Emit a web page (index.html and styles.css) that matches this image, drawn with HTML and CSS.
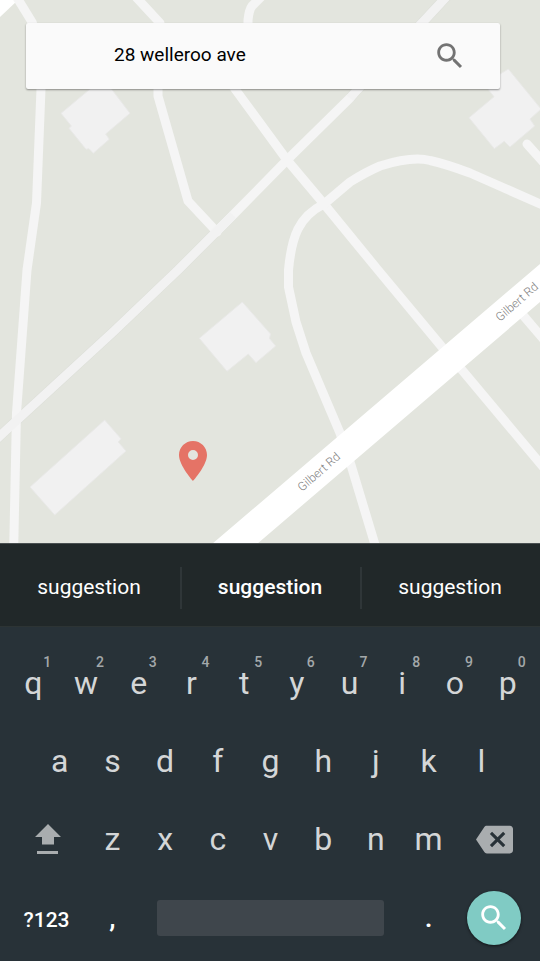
FILE: index.html
```html
<!DOCTYPE html>
<html lang="en">
<head>
<meta charset="utf-8">
<meta name="viewport" content="width=device-width, initial-scale=1">
<title>Map search</title>
<link rel="stylesheet" href="styles.css">
</head>
<body>
<main class="map">
  <svg class="map-canvas" viewBox="0 0 540 543" preserveAspectRatio="xMidYMid slice" aria-hidden="true">
    <polygon class="highway" points="0,0 18,0 0,17"/>
    <g class="lane-edge">
      <path d="M-5 440.500L15 422L113 332L178 270L217 231L233 215"/>
      <path d="M350 98L358 89L422 23L448 -5"/>
    </g>
    <g class="street">
      <path d="M16 -4L32 22L41 50V89L36.500 203L27 270L16.500 413L13.700 548"/>
      <path d="M135 -4L160 23L158 60V96L188 201L217 232"/>
      <path d="M248 30V20Q249 10 252 6L262 -4"/>
      <path d="M217 231L233 215L287 160L350 98"/>
      <path d="M225 75L235 89L287 160L324 204L378 270L442 347L462 370L544 468"/>
      <path d="M545 206L470 173Q446 164 430 160.500Q412 156 380 166Q366 172 350 182L324 204Q306 213 298 229Q291 243 288.500 270V287L296 322L306 353L340 433L351 465L376 548"/>
      <path d="M527 144L545 164"/>
      <path d="M522 314L545 341"/>
    </g>
    <g class="lane">
      <path d="M-5 440.500L15 422L113 332L178 270L217 231L233 215"/>
      <path d="M350 98L358 89L422 23L448 -5"/>
    </g>
    <polygon class="highway" points="212,544 540,264 545,260 545,298 540,302 257,544"/>
    <g class="building">
      <polygon points="96,84 110,87 130,113.300 105.700,134 109.300,139.300 93.300,153.300 89,148.700 86,149.300 69,128.300 71.300,126 61,113.300"/>
      <polygon points="508.300,69 541,109 530,119 534.700,126 510,147 504.300,141.300 494.300,148.700 469,117.700 494,96.700 484,84"/>
      <polygon points="242.300,302 270.500,334 269.500,338.500 275.700,346 256,362.700 248.300,354 227,371.300 199.300,338.300"/>
      <polygon points="104.700,420 121,438.700 118.300,442 126,451 54.700,515 30,487"/>
    </g>
    <path class="pin" d="M193 441c-7.740 0-14 6.260-14 14c0 10.500 14 26 14 26s14-15.500 14-26c0-7.740-6.260-14-14-14zm0 19a5 5 0 1 1 0-10a5 5 0 0 1 0 10z"/>
    <text class="road-name" transform="translate(302 492) rotate(-41)">Gilbert Rd</text>
    <text class="road-name" transform="translate(500 322) rotate(-41)">Gilbert Rd</text>
  </svg>
  <form class="search" role="search">
    <input class="search-input" type="text" value="28 welleroo ave" aria-label="Search address">
    <button class="search-button" type="button" aria-label="Search">
      <svg class="search-icon" viewBox="0 0 24 24"><path d="M15.500 14h-.79l-.28-.27C15.410 12.590 16 11.110 16 9.500 16 5.910 13.090 3 9.500 3S3 5.910 3 9.500 5.910 16 9.500 16c1.610 0 3.090-.59 4.230-1.570l.27.28v.79l5 4.990L20.490 19l-4.990-5zm-6 0C7.010 14 5 11.990 5 9.500S7.010 5 9.500 5 14 7.010 14 9.500 11.990 14 9.500 14z"/></svg>
    </button>
  </form>
</main>
<section class="suggestions" aria-label="Suggestions">
  <button class="suggestion" type="button">suggestion</button>
  <button class="suggestion suggestion-main" type="button">suggestion</button>
  <button class="suggestion" type="button">suggestion</button>
</section>
<section class="keyboard" aria-label="Keyboard">
  <div class="row">
    <button class="key" type="button">q<span class="hint">1</span></button>
    <button class="key" type="button">w<span class="hint">2</span></button>
    <button class="key" type="button">e<span class="hint">3</span></button>
    <button class="key" type="button">r<span class="hint">4</span></button>
    <button class="key" type="button">t<span class="hint">5</span></button>
    <button class="key" type="button">y<span class="hint">6</span></button>
    <button class="key" type="button">u<span class="hint">7</span></button>
    <button class="key" type="button">i<span class="hint">8</span></button>
    <button class="key" type="button">o<span class="hint">9</span></button>
    <button class="key" type="button">p<span class="hint">0</span></button>
  </div>
  <div class="row row-home">
    <button class="key" type="button">a</button>
    <button class="key" type="button">s</button>
    <button class="key" type="button">d</button>
    <button class="key" type="button">f</button>
    <button class="key" type="button">g</button>
    <button class="key" type="button">h</button>
    <button class="key" type="button">j</button>
    <button class="key" type="button">k</button>
    <button class="key" type="button">l</button>
  </div>
  <div class="row">
    <button class="key key-wide" type="button" aria-label="Shift">
      <svg class="shift-icon" viewBox="-2 0 28 30"><path d="M13 0L26 13H19V20.500H7V13H0zM2 27H23V30H2z"/></svg>
    </button>
    <button class="key" type="button">z</button>
    <button class="key" type="button">x</button>
    <button class="key" type="button">c</button>
    <button class="key" type="button">v</button>
    <button class="key" type="button">b</button>
    <button class="key" type="button">n</button>
    <button class="key" type="button">m</button>
    <button class="key key-wide" type="button" aria-label="Backspace">
      <svg class="backspace-icon" viewBox="0 0 24 24"><path d="M22 3H7c-.69 0-1.230.35-1.590.88L0 12l5.410 8.110c.36.53.9.89 1.590.89h15c1.100 0 2-.9 2-2V5c0-1.100-.9-2-2-2zm-3 12.590L17.590 17 14 13.410 10.410 17 9 15.590 12.590 12 9 8.410 10.410 7 14 10.590 17.590 7 19 8.410 15.410 12 19 15.590z"/></svg>
    </button>
  </div>
  <div class="row row-bottom">
    <button class="key key-wide key-symbols" type="button">?123</button>
    <button class="key key-mark" type="button">,</button>
    <button class="key key-space" type="button" aria-label="Space"></button>
    <button class="key key-mark" type="button">.</button>
    <div class="go-cell">
      <button class="key-go" type="button" aria-label="Search">
        <svg class="search-icon" viewBox="0 0 24 24"><path d="M15.500 14h-.79l-.28-.27C15.410 12.590 16 11.110 16 9.500 16 5.910 13.090 3 9.500 3S3 5.910 3 9.500 5.910 16 9.500 16c1.610 0 3.090-.59 4.230-1.570l.27.28v.79l5 4.990L20.490 19l-4.990-5zm-6 0C7.010 14 5 11.990 5 9.500S7.010 5 9.500 5 14 7.010 14 9.500 11.990 14 9.500 14z"/></svg>
      </button>
    </div>
  </div>
</section>
</body>
</html>
```
FILE: styles.css
```css
* {
  box-sizing: border-box;
}

body {
  margin: 0;
  min-height: 100vh;
  display: flex;
  flex-direction: column;
  background: #283238;
  font-family: Roboto, "Liberation Sans", sans-serif;
}

button {
  margin: 0;
  padding: 0;
  border: 0;
  background: none;
  color: inherit;
  font: inherit;
}

svg {
  display: block;
}

/* Map */
.map {
  flex: 1 0 0;
  min-height: 240px;
  display: grid;
  grid-template: minmax(0, 1fr) / minmax(0, 1fr);
  background: #e3e5de;
}

.map-canvas,
.search {
  grid-area: 1 / 1;
}

.map-canvas {
  width: 100%;
  height: 100%;
}

.street,
.lane,
.lane-edge {
  fill: none;
  stroke: #f5f5f5;
  stroke-width: 9;
  stroke-linejoin: round;
}

.street {
  stroke-linecap: round;
}

.lane {
  stroke: #f2f2f2;
}

.lane-edge {
  stroke: #dddfd9;
  stroke-width: 10;
}

.highway {
  fill: #fff;
}

.building {
  fill: #f1f1f1;
  stroke: #e9e9e8;
  stroke-width: 1;
}

.pin {
  fill: #e57366;
}

.road-name {
  fill: #808080;
  font-size: 12px;
  font-weight: 300;
}

/* Search box */
.search {
  position: relative;
  align-self: start;
  display: flex;
  align-items: center;
  height: 66px;
  margin: 23px 40px 0 26px;
  padding: 0 33px 0 88px;
  border-radius: 2px;
  background: #fafafa;
  box-shadow: 0 1px 2px rgba(0, 0, 0, 0.4);
}

.search-input {
  flex: 1;
  min-width: 0;
  height: 40px;
  padding: 0 0 4px;
  border: 0;
  outline: 0;
  background: none;
  color: #000;
  font: 400 19px/24px Roboto, "Liberation Sans", sans-serif;
}

.search-button {
  color: #737373;
}

.search-icon {
  width: 34px;
  height: 34px;
  fill: currentColor;
}

/* Suggestions */
.suggestions {
  display: grid;
  grid-template-columns: repeat(3, 1fr);
  align-items: center;
  height: 84px;
  padding-top: 6px;
  border-top: 1px solid #4a5051;
  border-bottom: 1px solid #2d3434;
  background: #212829;
  color: #fff;
}

.suggestion {
  height: 42px;
  padding: 0 2px 2px 0;
  font-size: 21px;
  line-height: 28px;
}

.suggestion + .suggestion {
  border-left: 2px solid #2f3638;
}

.suggestion-main {
  font-weight: 500;
}

/* Keyboard */
.keyboard {
  padding: 17px 6px 3px 7px;
  background: #283238;
  color: #d4d6d7;
}

.row {
  display: grid;
  grid-template-columns: repeat(20, minmax(0, 1fr));
  align-items: center;
  height: 78px;
}

.row-bottom {
  height: 80px;
}

.key {
  position: relative;
  grid-column: span 2;
  height: 54px;
  font-size: 32px;
  line-height: 40px;
}

.row-home .key:first-child {
  grid-column: 2 / span 2;
}

.key-wide,
.go-cell {
  grid-column: span 3;
  display: flex;
  align-items: center;
  justify-content: center;
}

.hint {
  position: absolute;
  top: -2px;
  left: calc(50% + 10px);
  color: #a3a8aa;
  font-size: 14px;
  font-weight: 500;
  line-height: 16px;
}

.shift-icon {
  width: 28px;
  height: 30px;
  fill: #a9adaf;
}

.backspace-icon {
  width: 37px;
  height: 37px;
  fill: #a9adaf;
}

.key-symbols {
  padding-top: 4px;
  color: #fff;
  font-size: 21px;
  font-weight: 500;
}

.key-mark {
  color: #fff;
  font-size: 28px;
  font-weight: 500;
}

.key-space {
  grid-column: span 10;
  height: 36px;
  margin: 0 18px;
  border-radius: 3px;
  background: #3f464c;
}

.key-go {
  display: flex;
  align-items: center;
  justify-content: center;
  width: 54px;
  height: 54px;
  border-radius: 50%;
  background: #80cbc4;
  box-shadow: 0 1px 3px rgba(0, 0, 0, 0.6);
  color: #fff;
}
```
